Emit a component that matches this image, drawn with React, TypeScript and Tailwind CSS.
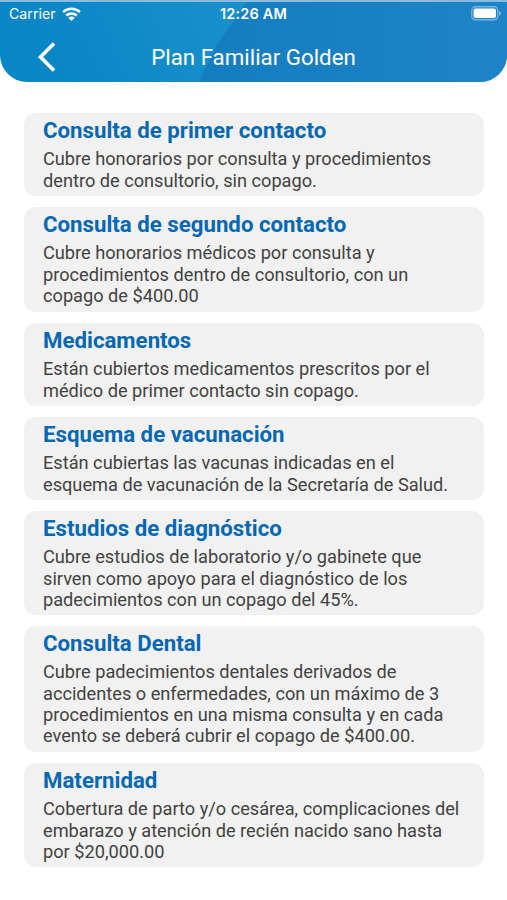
const cards: { title: string; height: string; lines: string[] }[] = [
  { title: "Consulta de primer contacto", height: "h-[83px]", lines: ["Cubre honorarios por consulta y procedimientos", "dentro de consultorio, sin copago."] },
  { title: "Consulta de segundo contacto", height: "h-[105px]", lines: ["Cubre honorarios médicos por consulta y", "procedimientos dentro de consultorio, con un", "copago de $400.00"] },
  { title: "Medicamentos", height: "h-[83px]", lines: ["Están cubiertos medicamentos prescritos por el", "médico de primer contacto sin copago."] },
  { title: "Esquema de vacunación", height: "h-[83px]", lines: ["Están cubiertas las vacunas indicadas en el", "esquema de vacunación de la Secretaría de Salud."] },
  { title: "Estudios de diagnóstico", height: "h-[104px]", lines: ["Cubre estudios de laboratorio y/o gabinete que", "sirven como apoyo para el diagnóstico de los", "padecimientos con un copago del 45%."] },
  { title: "Consulta Dental", height: "h-[126px]", lines: ["Cubre padecimientos dentales derivados de", "accidentes o enfermedades, con un máximo de 3", "procedimientos en una misma consulta y en cada", "evento se deberá cubrir el copago de $400.00."] },
  { title: "Maternidad", height: "h-[104px]", lines: ["Cobertura de parto y/o cesárea, complicaciones del", "embarazo y atención de recién nacido sano hasta", "por $20,000.00"] },
];

function HeaderBackdrop() {
  return (
    <svg className="absolute inset-0" width="507" height="82" viewBox="0 0 507 82" aria-hidden="true">
      <defs>
        <linearGradient id="left" gradientUnits="userSpaceOnUse" x1="60" y1="82" x2="230" y2="0">
          <stop offset="0" stopColor="#0986c5" />
          <stop offset="1" stopColor="#1a90cb" />
        </linearGradient>
        <linearGradient id="right" gradientUnits="userSpaceOnUse" x1="200" y1="0" x2="507" y2="0">
          <stop offset="0" stopColor="#147dc0" />
          <stop offset="1" stopColor="#1e84c5" />
        </linearGradient>
      </defs>
      <rect width="507" height="82" fill="url(#left)" />
      <path d="M248 0H507V82H199L216 46Z" fill="url(#right)" />
      <rect width="507" height="2" fill="#8bbbdc" />
    </svg>
  );
}

function Wifi() {
  return (
    <svg width="19" height="14" viewBox="0 0 19 14" fill="none" stroke="white" strokeWidth="2.5" aria-hidden="true">
      <path d="M1.1 5.2C5.8 .7 13.2 .7 17.9 5.2" />
      <path d="M4.3 8.5C7.2 5.7 11.8 5.7 14.7 8.5" />
      <path d="M9.5 13.9L6.3 10.7C8.1 9.1 10.9 9.1 12.7 10.7Z" fill="white" stroke="none" />
    </svg>
  );
}

function Battery() {
  return (
    <svg width="31" height="15" viewBox="0 0 31 15" fill="none" aria-hidden="true">
      <rect x=".75" y=".75" width="26" height="13" rx="3.7" stroke="white" strokeOpacity=".4" strokeWidth="1.3" />
      <rect x="2.5" y="2.5" width="22.5" height="9.5" rx="2" fill="white" />
      <path d="M28.2 4.9C30.6 5.8 30.6 8.7 28.2 9.6Z" fill="white" fillOpacity=".45" />
    </svg>
  );
}

export default function App() {
  return (
    <div className="h-[900px] w-[507px] overflow-hidden bg-white font-['Roboto',sans-serif]">
      <header className="relative h-[82px] overflow-hidden rounded-b-[27px] text-white">
        <HeaderBackdrop />
        <div className="relative grid h-7 grid-cols-3 items-center pl-[9px] pr-[9px] font-['Inter',sans-serif] text-[14.5px] leading-[18px]">
          <div className="flex items-center gap-[6px]">
            <span className="text-[14.2px]">Carrier</span>
            <Wifi />
          </div>
          <span className="text-center font-semibold tracking-[0.15px]">12:26 AM</span>
          <div className="-mr-1 flex justify-end pb-px"><Battery /></div>
        </div>
        <div className="relative grid grid-cols-[1fr_auto_1fr] items-center pt-[14px]">
          <button type="button" aria-label="Atrás" className="pl-[37px]">
            <svg width="19" height="30" viewBox="0 0 19 30" fill="none" stroke="white" strokeWidth="3.6" aria-hidden="true">
              <path d="M17 1.5L3.5 15L17 28.5" />
            </svg>
          </button>
          <h1 className="pb-px text-[22.3px] leading-[26px]">Plan Familiar Golden</h1>
          <span />
        </div>
      </header>
      <main className="flex flex-col gap-[11px] pl-6 pr-[23px] pt-[31px]">
        {cards.map((card) => (
          <section key={card.title} className={`${card.height} rounded-xl bg-[#f1f1f1] pl-[19px] pt-[4.4px]`}>
            <h2 className="text-[22.24px] font-bold leading-[26px] text-[#0667b2]">{card.title}</h2>
            <div className="pt-[4.9px] text-[18.2px] leading-[21.3px] text-[#424242]">
              {card.lines.map((line) => <p key={line} className="whitespace-nowrap">{line}</p>)}
            </div>
          </section>
        ))}
      </main>
    </div>
  );
}
